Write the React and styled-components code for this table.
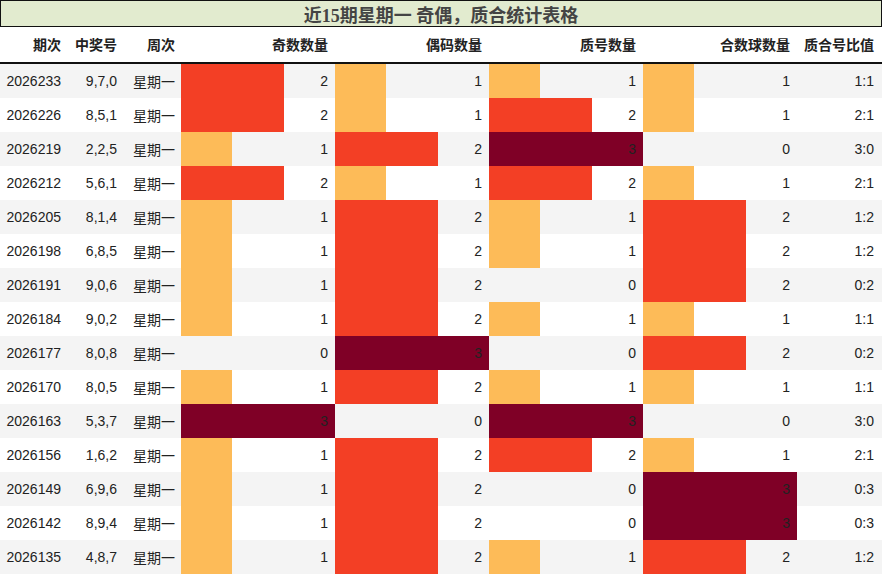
import React from "react";
import styled, { createGlobalStyle } from "styled-components";

const GlobalStyle = createGlobalStyle`
  body {
    margin: 0;
    background: #fff;
    font-family: "Liberation Sans", "Noto Sans CJK SC", sans-serif;
    color: #222;
  }
`;

const rows = [
  ["2026233", "9,7,0", 2, 1, 1, 1, "1:1"],
  ["2026226", "8,5,1", 2, 1, 2, 1, "2:1"],
  ["2026219", "2,2,5", 1, 2, 3, 0, "3:0"],
  ["2026212", "5,6,1", 2, 1, 2, 1, "2:1"],
  ["2026205", "8,1,4", 1, 2, 1, 2, "1:2"],
  ["2026198", "6,8,5", 1, 2, 1, 2, "1:2"],
  ["2026191", "9,0,6", 1, 2, 0, 2, "0:2"],
  ["2026184", "9,0,2", 1, 2, 1, 1, "1:1"],
  ["2026177", "8,0,8", 0, 3, 0, 2, "0:2"],
  ["2026170", "8,0,5", 1, 2, 1, 1, "1:1"],
  ["2026163", "5,3,7", 3, 0, 3, 0, "3:0"],
  ["2026156", "1,6,2", 1, 2, 2, 1, "2:1"],
  ["2026149", "6,9,6", 1, 2, 0, 3, "0:3"],
  ["2026142", "8,9,4", 1, 2, 0, 3, "0:3"],
  ["2026135", "4,8,7", 1, 2, 1, 2, "1:2"],
];

const barColors = { 0: "transparent", 1: "#fdbb58", 2: "#f33f25", 3: "#7f0026" };

const headers = ["期次", "中奖号", "周次", "奇数数量", "偶码数量", "质号数量", "合数球数量", "质合号比值"];

const Page = styled.div`
  width: 882px;
`;

const Title = styled.div`
  height: 27px;
  box-sizing: border-box;
  border: 1px solid #111;
  background: #e2ebcf;
  display: flex;
  align-items: center;
  justify-content: center;
  font-family: "Liberation Serif", "Noto Sans CJK SC", serif;
  font-weight: bold;
  font-size: 18px;
  color: #444;
`;

const Row = styled.div`
  display: grid;
  grid-template-columns: 67px 56px 58px 154px 154px 154px 154px 85px;
  height: ${(p) => (p.$head ? "35px" : "34px")};
  background: ${(p) => (p.$shade ? "#f4f4f4" : "#fff")};
  border-bottom: ${(p) => (p.$head ? "2px solid #111" : "none")};
  font-weight: ${(p) => (p.$head ? "bold" : "normal")};
`;

const Cell = styled.div`
  display: flex;
  align-items: ${(p) => (p.$head ? "flex-end" : "center")};
  justify-content: flex-end;
  padding-right: ${(p) => p.$pad || 6}px;
  padding-bottom: ${(p) => (p.$head ? "8px" : "0")};
  font-size: 14px;
  white-space: nowrap;
`;

const BarCell = styled(Cell)`
  background: ${(p) =>
    `linear-gradient(to right, ${barColors[p.$n]} ${(p.$n / 3) * 100}%, transparent ${(p.$n / 3) * 100}%)`};
`;

const padFor = (i) => (i === 7 ? 8 : i >= 3 ? 7 : 6);

export default function App() {
  return (
    <Page>
      <GlobalStyle />
      <Title>近15期星期一 奇偶，质合统计表格</Title>
      <Row $head>
        {headers.map((h, i) => (
          <Cell key={h} $head $pad={padFor(i)}>{h}</Cell>
        ))}
      </Row>
      {rows.map((r, i) => (
        <Row key={r[0]} $shade={i % 2 === 0}>
          <Cell>{r[0]}</Cell>
          <Cell>{r[1]}</Cell>
          <Cell>星期一</Cell>
          {r.slice(2, 6).map((n, j) => (
            <BarCell key={j} $n={n} $pad={7}>{n}</BarCell>
          ))}
          <Cell $pad={8}>{r[6]}</Cell>
        </Row>
      ))}
    </Page>
  );
}
